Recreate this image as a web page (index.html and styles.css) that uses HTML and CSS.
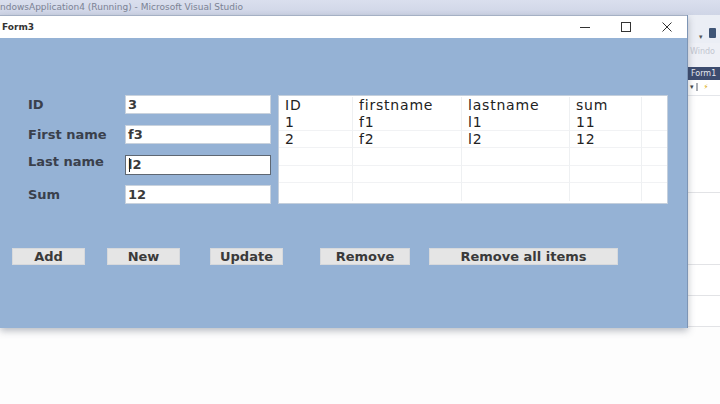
FILE: index.html
```html
<!DOCTYPE html>
<html lang="en">
<head>
    <meta charset="UTF-8">
    <title>Form3</title>
    <link rel="stylesheet" href="styles.css">
</head>
<body>

<!-- Visual Studio title strip behind the form -->
<div class="vs-title">ndowsApplication4 (Running) - Microsoft Visual Studio</div>

<div class="desk">
    <!-- Running form -->
    <div class="window">
        <div class="titlebar">
            <span class="caption">Form3</span>
            <div class="controls">
                <svg class="ctl" width="12" height="12" viewBox="0 0 12 12"><path d="M1 6.5h10" stroke="#333" stroke-width="1"/></svg>
                <svg class="ctl" width="12" height="12" viewBox="0 0 12 12"><rect x="1.5" y="1.5" width="9" height="9" fill="none" stroke="#333" stroke-width="1"/></svg>
                <svg class="ctl" width="12" height="12" viewBox="0 0 12 12"><path d="M1.5 1.5l9 9M10.5 1.5l-9 9" stroke="#333" stroke-width="1"/></svg>
            </div>
        </div>

        <div class="client">
            <div class="top-row">
                <div class="fields">
                    <label class="lbl">ID</label>
                    <div class="box">3</div>
                    <label class="lbl">First name</label>
                    <div class="box">f3</div>
                    <label class="lbl lbl-up">Last name</label>
                    <div class="box focused"><span class="caret"></span>l2</div>
                    <label class="lbl">Sum</label>
                    <div class="box">12</div>
                </div>

                <div class="list">
                    <div class="list-row head">
                        <div class="cell c1">ID</div><div class="cell c2">firstname</div><div class="cell c3">lastname</div><div class="cell c4">sum</div><div class="cell c5"></div>
                    </div>
                    <div class="list-row">
                        <div class="cell c1">1</div><div class="cell c2">f1</div><div class="cell c3">l1</div><div class="cell c4">11</div><div class="cell c5"></div>
                    </div>
                    <div class="list-row">
                        <div class="cell c1">2</div><div class="cell c2">f2</div><div class="cell c3">l2</div><div class="cell c4">12</div><div class="cell c5"></div>
                    </div>
                    <div class="list-row empty">
                        <div class="cell c1"></div><div class="cell c2"></div><div class="cell c3"></div><div class="cell c4"></div><div class="cell c5"></div>
                    </div>
                    <div class="list-row empty">
                        <div class="cell c1"></div><div class="cell c2"></div><div class="cell c3"></div><div class="cell c4"></div><div class="cell c5"></div>
                    </div>
                    <div class="list-row empty last">
                        <div class="cell c1"></div><div class="cell c2"></div><div class="cell c3"></div><div class="cell c4"></div><div class="cell c5"></div>
                    </div>
                </div>
            </div>

            <div class="buttons">
                <button class="btn b-add">Add</button>
                <button class="btn b-new">New</button>
                <button class="btn b-update">Update</button>
                <button class="btn b-remove">Remove</button>
                <button class="btn b-all">Remove all items</button>
            </div>
        </div>
    </div>

    <!-- Visual Studio properties pane peeking out on the right -->
    <div class="vs-pane">
        <div class="pane-tools">
            <span class="tool-arrow">&#9662;</span>
            <span class="tool-icon"></span>
        </div>
        <div class="pane-faded">Windo</div>
        <div class="pane-head">Form1</div>
        <div class="pane-combo">
            <span class="combo-arrow">&#9662;</span>
            <span class="combo-icon">&#9889;</span>
        </div>
        <div class="pane-body">
            <div class="pane-line l1"></div>
            <div class="pane-line l2"></div>
            <div class="pane-line l3"></div>
            <div class="pane-line l4"></div>
        </div>
    </div>
</div>

</body>
</html>
```

FILE: styles.css
```css
body {
    margin: 0;
    padding: 0;
    background-color: #fdfdfd;
    font-family: 'DejaVu Sans', Verdana, sans-serif;
    color: #2b2b2b;
    width: 720px;
    height: 404px;
    overflow: hidden;
}
.vs-title {
    height: 15px;
    background: linear-gradient(#dadfee, #cfd5e6);
    color: #7b8294;
    font-size: 9px;
    line-height: 14px;
    white-space: nowrap;
    overflow: hidden;
}
.desk {
    display: flex;
    align-items: flex-start;
}
/* Form window */
.window {
    width: 688px;
    flex-shrink: 0;
    box-shadow: 0 3px 7px rgba(60, 70, 90, 0.35);
    border-right: 1px solid #7d95b5;
    box-sizing: border-box;
    position: relative;
    z-index: 1;
}
.titlebar {
    height: 22px;
    background-color: #ffffff;
    border-top: 1px solid #a5b0c4;
    display: flex;
    align-items: center;
    justify-content: space-between;
}
.caption {
    font-size: 9px;
    font-weight: bold;
    color: #333;
    padding-left: 2px;
}
.controls {
    display: flex;
    gap: 29px;
    padding-right: 14px;
}
.client {
    height: 290px;
    background-color: #95b2d5;
    box-sizing: border-box;
    padding-top: 57px;
}
.top-row {
    display: flex;
    align-items: flex-start;
}
.fields {
    display: grid;
    grid-template-columns: 97px 146px;
    grid-auto-rows: 19px;
    row-gap: 11px;
    margin-left: 28px;
    align-items: center;
}
.lbl {
    font-size: 13px;
    font-weight: bold;
    color: #3a404c;
    white-space: nowrap;
}
.lbl-up {
    margin-top: -7px;
}
.box {
    height: 19px;
    box-sizing: border-box;
    background-color: #ffffff;
    border: 1px solid #c9d2dd;
    font-size: 13px;
    font-weight: bold;
    color: #3a3a3a;
    line-height: 17px;
    padding-left: 2px;
    position: relative;
}
.box.focused {
    border: 1px solid #5e6772;
    height: 20px;
}
.caret {
    position: absolute;
    left: 3px;
    top: 2px;
    width: 1px;
    height: 14px;
    background-color: #222;
}
/* List view */
.list {
    margin-left: 7px;
    width: 390px;
    height: 109px;
    background-color: #ffffff;
    border: 1px solid #c4cfdc;
    box-sizing: border-box;
    padding-top: 1px;
}
.list-row {
    display: flex;
    height: 17px;
}
.list-row.empty {
    height: 17.5px;
}
.cell {
    box-sizing: border-box;
    font-size: 14px;
    letter-spacing: 0.8px;
    color: #222;
    line-height: 17px;
    padding-left: 6px;
    white-space: nowrap;
    border-right: 1px solid #eef0f2;
    border-bottom: 1px solid #f1f2f4;
}
.list-row.head .cell {
    border-bottom: none;
}
.list-row.last .cell {
    border-bottom: none;
}
.c1 { width: 74px; }
.c2 { width: 109px; }
.c3 { width: 108px; }
.c4 { width: 72px; }
.c5 { width: 25px; border-right: none; }
/* Buttons */
.buttons {
    display: flex;
    margin-top: 44px;
    margin-left: 12px;
}
.btn {
    height: 17px;
    padding: 0;
    border: 1px solid #d7d9dc;
    background-color: #e5e5e5;
    font-family: 'DejaVu Sans', Verdana, sans-serif;
    font-size: 13px;
    font-weight: bold;
    line-height: 15px;
    color: #3a3a3a;
    white-space: nowrap;
}
.b-add { width: 73px; }
.b-new { width: 73px; margin-left: 22px; }
.b-update { width: 73px; margin-left: 30px; }
.b-remove { width: 90px; margin-left: 37px; }
.b-all { width: 189px; margin-left: 19px; }
/* Visual Studio side pane */
.vs-pane {
    width: 32px;
    height: 312px;
    background-color: #f4f5f8;
    display: flex;
    flex-direction: column;
}
.pane-tools {
    height: 29px;
    background-color: #ebeef5;
    display: flex;
    align-items: flex-end;
    gap: 6px;
    padding-left: 11px;
    padding-bottom: 2px;
    box-sizing: border-box;
}
.tool-arrow {
    font-size: 7px;
    color: #555;
}
.tool-icon {
    width: 7px;
    height: 10px;
    background-color: #3f5576;
    border-radius: 1px;
    margin-bottom: 3px;
}
.pane-faded {
    height: 25px;
    font-size: 8px;
    line-height: 18px;
    color: #c2c6d0;
    padding-left: 2px;
    overflow: hidden;
    background-color: #eef0f6;
}
.pane-head {
    height: 13px;
    background-color: #3d4c6f;
    color: #e6e9f0;
    font-size: 8px;
    line-height: 13px;
    padding-left: 3px;
    overflow: hidden;
    white-space: nowrap;
}
.pane-combo {
    height: 16px;
    background-color: #ffffff;
    display: flex;
    align-items: center;
    gap: 6px;
    padding-left: 2px;
    border-bottom: 1px solid #e4e6ea;
}
.combo-arrow {
    font-size: 7px;
    color: #444;
    border-right: 2px solid #a9adb4;
    padding-right: 2px;
}
.combo-icon {
    font-size: 7px;
    color: #d8a400;
}
.pane-body {
    flex: 1;
    background-color: #ffffff;
    display: flex;
    flex-direction: column;
}
.pane-line {
    border-top: 1px solid #e2e3e6;
}
.l1 { margin-top: 96px; }
.l2 { margin-top: 71px; }
.l3 { margin-top: 30px; }
.l4 { margin-top: 30px; }
```
